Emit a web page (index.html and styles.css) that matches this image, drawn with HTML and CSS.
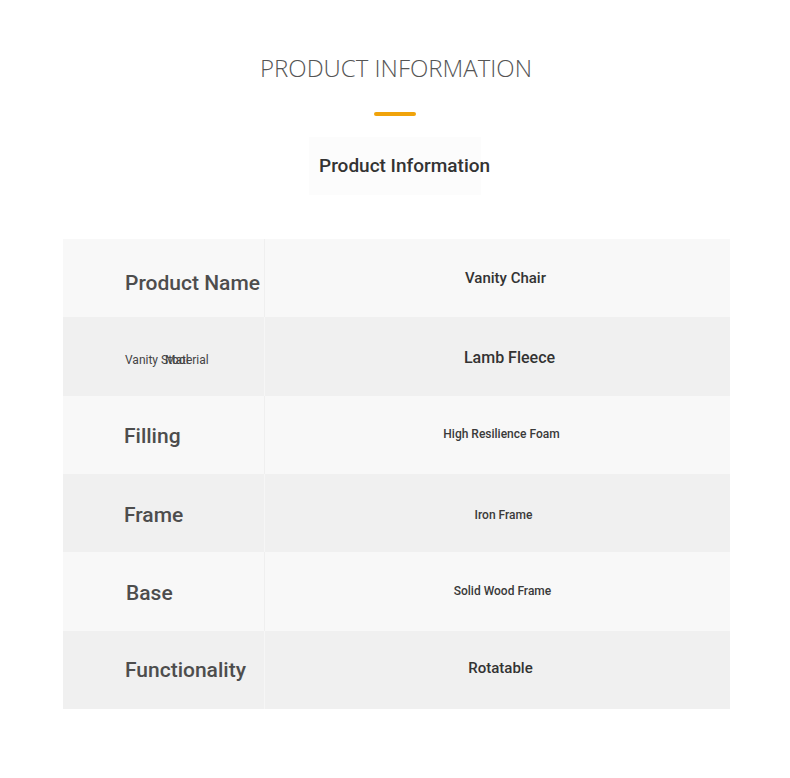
FILE: index.html
```html
<!DOCTYPE html>
<html lang="en">
<head>
<meta charset="utf-8">
<title>Product Information</title>
<link rel="stylesheet" href="styles.css">
</head>
<body>
<main class="page">
  <header class="head">
    <h1 class="title">PRODUCT INFORMATION</h1>
    <div class="bar"></div>
    <h2 class="subtitle"><span class="subtitle-box">Product Information</span></h2>
  </header>
  <section class="table">
    <div class="row odd">
      <div class="label"><span class="lbl lbl-lg lbl-low">Product Name</span></div>
      <div class="value"><span class="val val-md shift-8">Vanity Chair</span></div>
    </div>
    <div class="row even">
      <div class="label"><span class="stack"><span class="lbl lbl-sm">Vanity Stool</span><span class="lbl lbl-sm overlay">Material</span></span></div>
      <div class="value"><span class="val val-lg shift-12 low-2">Lamb Fleece</span></div>
    </div>
    <div class="row odd">
      <div class="label"><span class="lbl lbl-lg back-1 low-1">Filling</span></div>
      <div class="value"><span class="val val-sm shift-4 up-1">High Resilience Foam</span></div>
    </div>
    <div class="row even">
      <div class="label"><span class="lbl lbl-lg back-1 low-1">Frame</span></div>
      <div class="value"><span class="val val-sm shift-6 low-1">Iron Frame</span></div>
    </div>
    <div class="row odd">
      <div class="label"><span class="lbl lbl-lg fwd-1 low-1">Base</span></div>
      <div class="value"><span class="val val-sm shift-5">Solid Wood Frame</span></div>
    </div>
    <div class="row even">
      <div class="label"><span class="lbl lbl-lg">Functionality</span></div>
      <div class="value"><span class="val val-md shift-3 up-2">Rotatable</span></div>
    </div>
  </section>
</main>
</body>
</html>
```

FILE: styles.css
```css
* { box-sizing: border-box; }

html, body {
  margin: 0;
  padding: 0;
  background: #ffffff;
}

body {
  font-family: Roboto, "Liberation Sans", Arial, sans-serif;
  color: #333;
}

.page {
  width: 790px;
  padding: 51px 0 69px;
}

.head {
  display: flex;
  flex-direction: column;
  align-items: center;
}

.title {
  margin: 0;
  font-family: "Open Sans", Roboto, sans-serif;
  font-weight: 300;
  font-size: 24px;
  line-height: 34px;
  color: #555;
  padding-left: 2px;
}

.bar {
  width: 42px;
  height: 4px;
  border-radius: 2px;
  background: #f0a30a;
  margin-top: 27px;
}

.subtitle {
  margin: 21px 0 0;
  font-weight: 500;
  font-size: 19px;
  line-height: 22px;
  color: #333;
}

.subtitle-box {
  display: block;
  padding: 18px 0 18px 10px;
  background: #fcfcfc;
  width: 172px;
  white-space: nowrap;
}

.table {
  margin: 44px 60px 0 63px;
  display: flex;
  flex-direction: column;
}

.row {
  display: grid;
  grid-template-columns: 202px 1fr;
  height: 78.33px;
}

.row.odd { background: #f8f8f8; }
.row.even { background: #f0f0f0; }

.label {
  display: flex;
  align-items: center;
  padding-left: 62px;
  border-right: 1px solid #f3f3f3;
  color: #4d4d4d;
}

.row.odd .label { border-right-color: #efefef; }
.row.even .label { border-right-color: #f6f6f6; }

.value {
  display: flex;
  align-items: center;
  justify-content: center;
  color: #333;
}

.lbl {
  font-weight: 500;
  white-space: nowrap;
}

.lbl-lg {
  font-size: 21px;
  line-height: 24px;
}

.lbl-sm {
  font-size: 12px;
  line-height: 14px;
  font-weight: 400;
  color: #444;
}

.lbl-low { margin-top: 10px; }
.low-1 { margin-top: 3px; }
.low-2 { margin-top: 4px; }
.up-1 { margin-bottom: 2px; }
.up-2 { margin-top: -4px; }
.back-1 { margin-left: -1px; }
.fwd-1 { margin-left: 1px; }

.stack {
  display: grid;
  margin-top: 8px;
}

.stack > .lbl {
  grid-area: 1 / 1;
}

.stack > .overlay {
  margin-left: 40px;
}

.val {
  font-weight: 500;
  white-space: nowrap;
}

.val-lg { font-size: 16px; line-height: 20px; }
.val-md { font-size: 15px; line-height: 18px; }
.val-sm { font-size: 12px; line-height: 14px; color: #3a3a3a; }

.shift-3 { margin-left: 6px; }
.shift-4 { margin-left: 8px; }
.shift-5 { margin-left: 10px; }
.shift-6 { margin-left: 12px; }
.shift-8 { margin-left: 16px; }
.shift-12 { margin-left: 24px; }
```
